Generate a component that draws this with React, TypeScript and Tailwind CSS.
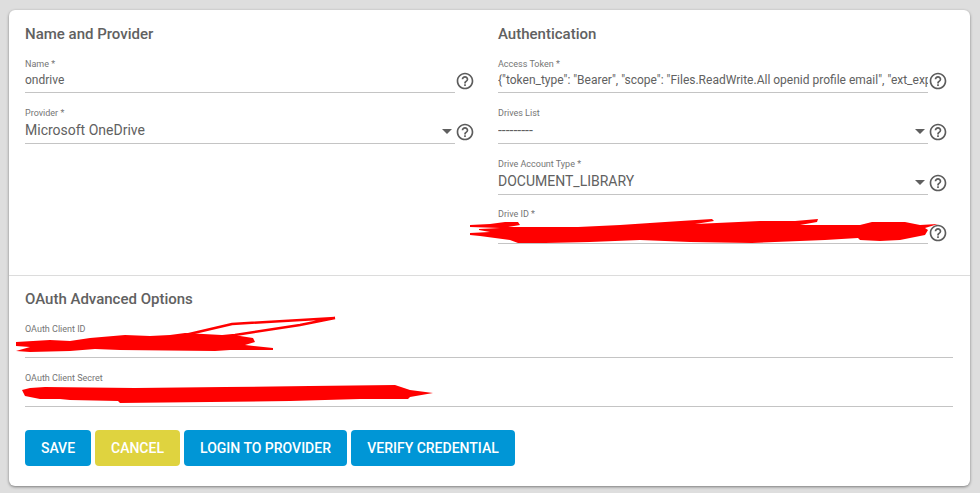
const HelpIcon = () => (
	<svg viewBox="0 0 24 24" className="w-5 h-5 shrink-0 fill-[#5c5c5c]">
		<path d="M11 18h2v-2h-2v2zm1-16C6.48 2 2 6.48 2 12s4.48 10 10 10 10-4.48 10-10S17.52 2 12 2zm0 18c-4.41 0-8-3.59-8-8s3.59-8 8-8 8 3.59 8 8-3.59 8-8 8zm0-14c-2.21 0-4 1.79-4 4h2c0-1.1.9-2 2-2s2 .9 2 2c0 2-3 1.75-3 5h2c0-2.25 3-2.5 3-5 0-2.21-1.79-4-4-4z" />
	</svg>
);

const Field = ({
	label,
	value,
	select,
	help = true,
	className = "",
}: {
	label: string;
	value?: string;
	select?: boolean;
	help?: boolean;
	className?: string;
}) => (
	<div className={`flex items-end ${className}`}>
		<div
			className={`flex-1 min-w-0 border-b border-[#c4c4c4] flex flex-col ${
				select ? "h-[38px]" : "h-[36px]"
			}`}
		>
			<span className="text-[9px] leading-[12px] pt-px h-[13px] text-[#757575]">{label}</span>
			<div className={`flex items-center h-[22px] ${select ? "" : "pb-[2px]"}`}>
				<span
					className={`flex-1 min-w-0 overflow-hidden whitespace-nowrap text-[#616161] ${
						select ? "text-[14px]" : "text-[12px]"
					}`}
				>
					{value}
				</span>
				{select && (
					<span className="mr-[3px] mt-[2px] w-0 h-0 border-x-[5px] border-x-transparent border-t-[5px] border-t-[#5f5f5f]" />
				)}
			</div>
		</div>
		{help && (
			<span className="w-[20px] mb-[2px]">
				<HelpIcon />
			</span>
		)}
	</div>
);

const Button = ({ children, className }: { children: string; className: string }) => (
	<button className={`h-[36px] rounded text-white text-[14px] font-medium ${className}`}>
		{children}
	</button>
);

export default function App() {
	return (
		<div className="w-[980px] h-[493px] bg-[#dedede] pt-[10px] pl-[9px] font-['Roboto',sans-serif] overflow-hidden">
			<div className="relative w-[961px] h-[476px] bg-white rounded-md shadow-[0_1px_3px_rgba(0,0,0,0.45)]">
				<div className="h-[266px] border-b border-[#dcdcdc] pt-[15px] pl-[16px] grid grid-cols-[450px_450px] gap-x-[23px]">
					<div>
						<h2 className="text-[15px] leading-[18px] font-medium text-[#616161] mb-[14px]">Name and Provider</h2>
						<Field label="Name *" value="ondrive" />
						<Field label="Provider *" value="Microsoft OneDrive" select className="mt-[13px]" />
					</div>
					<div>
						<h2 className="text-[15px] leading-[18px] font-medium text-[#616161] mb-[14px]">Authentication</h2>
						<Field
							label="Access Token *"
							value={'{"token_type": "Bearer", "scope": "Files.ReadWrite.All openid profile email", "ext_expires_in": 3600}'}
						/>
						<Field label="Drives List" value="---------" select className="mt-[13px]" />
						<Field label="Drive Account Type *" value="DOCUMENT_LIBRARY" select className="mt-[13px]" />
						<Field label="Drive ID *" className="mt-[13px] [&>span]:mb-[1px] [&>div>span]:-mt-px" />
					</div>
				</div>
				<div className="pt-[14px] px-[16px]">
					<h2 className="text-[15px] leading-[18px] font-medium text-[#616161] mb-[14px]">OAuth Advanced Options</h2>
					<Field label="OAuth Client ID" help={false} className="w-[928px]" />
					<Field label="OAuth Client Secret" help={false} className="w-[928px] mt-[13px]" />
					<div className="flex gap-[4px] mt-[23px]">
						<Button className="w-[66px] bg-[#0096d6]">SAVE</Button>
						<Button className="w-[85px] bg-[#dfd33f]">CANCEL</Button>
						<Button className="w-[163px] bg-[#0096d6]">LOGIN TO PROVIDER</Button>
						<Button className="w-[164px] bg-[#0096d6]">VERIFY CREDENTIAL</Button>
					</div>
				</div>
				{/* red scribbles hiding the secrets, page coordinates */}
				<svg viewBox="9 10 961 476" className="absolute inset-0 w-[961px] h-[476px] pointer-events-none fill-[#ff0000]">
					<path d="M470 225L490 224L505 222L518 222L520 225L508 227L540 227L578 227L620 225L665 222L712 219L714 221L695 224L760 221L795 221L818 219L817 222L800 225L860 225L872 222L905 222L920 225L938 224L925 228L928 230L925 235L900 240L880 241L860 240L858 238L825 240L800 241L752 243L690 242L640 240L590 242L545 243L518 243L510 240L480 236L470 235L470 233L490 232L479 230L479 229L500 228L470 227Z" />
					<path d="M16 342L50 340L70 341L90 338L125 335L150 336L170 335L185 333L240 336L253 338L255 342L245 345L273 348L273 350L230 350L215 351L120 350L95 349L70 351L30 352L16 351L30 347L16 346Z" />
					<path d="M185 335L232 324L335 318L300 325L235 335L215 337" className="fill-none stroke-[#ff0000] stroke-[2.5]" />
					<path d="M22 390L30 388L45 387L135 388L225 387L310 386L395 385L410 390L433 393L410 397L408 399L360 399L290 401L210 402L120 403L118 401L70 400L60 399L40 399L25 396Z" />
				</svg>
			</div>
		</div>
	);
}
